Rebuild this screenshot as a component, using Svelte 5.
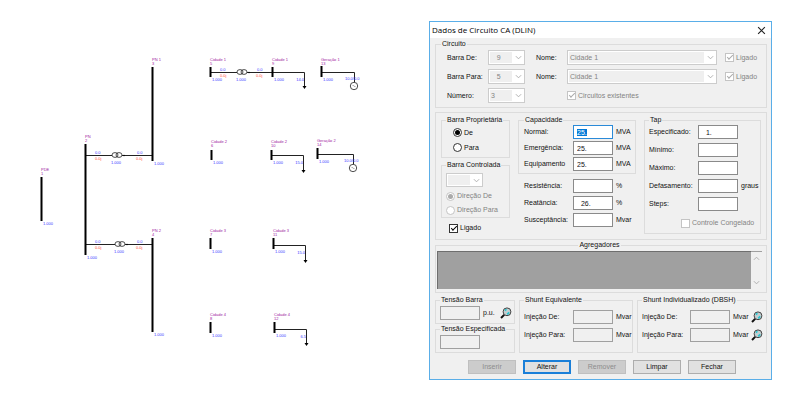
<script>
    import { onMount } from "svelte";

    // bars of the network: position, height and the name/number written above
    const buses = [
        { x: 41, y: 177, h: 44, name: "PDE", num: 1, lift: 6 },
        { x: 85, y: 144, h: 111, name: "PN", num: 2, lift: 6 },
        { x: 152, y: 67, h: 94, name: "PN 1", num: 3, lift: 6 },
        { x: 152, y: 238, h: 94, name: "PN 2", num: 4, lift: 6 },
        { x: 210, y: 67, h: 10, name: "Cidade 1", num: 5, lift: 6 },
        { x: 272, y: 67, h: 10, name: "Cidade 1", num: 9, lift: 6 },
        { x: 321, y: 66, h: 11, name: "Geração 1", num: 13, lift: 5 },
        { x: 211, y: 150, h: 10, name: "Cidade 2", num: 6, lift: 7 },
        { x: 271, y: 150, h: 10, name: "Cidade 2", num: 10, lift: 7 },
        { x: 317, y: 148, h: 11, name: "Geração 2", num: 14, lift: 6 },
        { x: 210, y: 238, h: 11, name: "Cidade 3", num: 7, lift: 6 },
        { x: 273, y: 238, h: 11, name: "Cidade 3", num: 11, lift: 6 },
        { x: 210, y: 322, h: 11, name: "Cidade 4", num: 8, lift: 6 },
        { x: 274, y: 322, h: 11, name: "Cidade 4", num: 12, lift: 6 },
    ];

    const branches = [
        { x1: 86, x2: 152, y: 155, mid: 117 },
        { x1: 86, x2: 152, y: 244, mid: 120 },
        { x1: 211, x2: 272, y: 72, mid: 242 },
    ];

    const loads = [
        { x1: 272, x2: 304, y: 72, end: 86, value: "14.0" },
        { x1: 271, x2: 303, y: 155, end: 170, value: "15.0" },
        { x1: 273, x2: 305, y: 245, end: 260, value: "15.0" },
        { x1: 274, x2: 306, y: 329, end: 343, value: "6.5" },
    ];

    const generators = [
        { x1: 321, x2: 354, y: 72 },
        { x1: 317, x2: 353, y: 154 },
    ];

    const capacidade = [
        { id: "normal", label: "Normal:", value: "25." },
        { id: "emergencia", label: "Emergência:", value: "25." },
        { id: "equipamento", label: "Equipamento", value: "25." },
    ];

    const parametros = [
        { id: "resistencia", label: "Resistência:", value: "", unit: "%" },
        { id: "reatancia", label: "Reatância:", value: "  26.", unit: "%" },
        { id: "susceptancia", label: "Susceptância:", value: "", unit: "Mvar" },
    ];

    const tap = [
        { id: "especificado", label: "Especificado:", value: "  1.", unit: "" },
        { id: "minimo", label: "Mínimo:", value: "", unit: "" },
        { id: "maximo", label: "Máximo:", value: "", unit: "" },
        { id: "defasamento", label: "Defasamento:", value: "", unit: "graus" },
        { id: "steps", label: "Steps:", value: "", unit: "" },
    ];

    let proprietaria = $state("de");
    let controlada = $state("de");
    let ligado = $state(true);

    onMount(() => {
        document.getElementById("normal").select();
    });
</script>

{#snippet combo(id, value, label)}
    <span class="combo">
        <select {id} disabled aria-label={label}>
            <option>{value}</option>
        </select>
        <svg viewBox="0 0 8 5"><path d="M1 1l3 3 3-3" /></svg>
    </span>
{/snippet}

{#snippet lens(label)}
    <button class="lens" aria-label={label}>
        <svg viewBox="0 0 12 12">
            <path d="M4.4 7.6L1 11" stroke="#111" stroke-width="2" />
            <circle cx="7" cy="4.8" r="3.9" fill="#c4ced0" stroke="#444" />
            <path d="M5 3.6l1.4-1.4M7.2 7.4l2-2" stroke="#20c8d4" stroke-width="1.6" />
        </svg>
    </button>
{/snippet}

<main>
    <svg class="network" viewBox="0 21 429 358">
        {#each branches as b}
            <path class="wire" d="M{b.x1} {b.y + 0.5}H{b.mid - 5}M{b.mid + 5} {b.y + 0.5}H{b.x2}" />
            <ellipse class="coil" cx={b.mid - 2} cy={b.y} rx="3" ry="2.4" />
            <ellipse class="coil" cx={b.mid + 2} cy={b.y} rx="3" ry="2.4" />
            <circle cx={b.mid + 7} cy={b.y + 0.5} r="0.8" />
            <text class="blue" x={b.x1 + 9} y={b.y - 1}>0.0</text>
            <text class="blue" x={b.x2 - 15} y={b.y - 1}>0.0</text>
            <text class="red" x={b.x1 + 9} y={b.y + 5}>0.0j</text>
            <text class="red" x={b.x2 - 16} y={b.y + 5}>0.0j</text>
            <text class="blue" x={b.mid - 6} y={b.y + 9}>1.000</text>
        {/each}

        {#each loads as l}
            <path class="wire" d="M{l.x1} {l.y + 0.5}H{l.x2 + 0.5}V{l.end}" />
            <path d="M{l.x2 - 1.5} {l.end}h4l-2 3z" />
            <text class="blue end" x={l.x2} y={l.y + 9}>{l.value}</text>
        {/each}

        {#each generators as g}
            <path class="wire" d="M{g.x1} {g.y + 0.5}H{g.x2 + 0.5}V{g.y + 10}" />
            <circle class="coil" cx={g.x2} cy={g.y + 14} r="3.7" />
            <path class="wave" d="M{g.x2 - 1.5} {g.y + 14}q0.8-2 1.5 0t1.5 0" />
            <text class="blue" x={g.x2 - 9} y={g.y + 8}>10.0/0.0</text>
        {/each}

        {#each buses as bus}
            <rect x={bus.x - 0.5} y={bus.y} width="2" height={bus.h} />
            <text class="purple" x={bus.x} y={bus.y - bus.lift}>{bus.name}</text>
            <text class="purple" x={bus.x} y={bus.y - bus.lift + 4}>{bus.num}</text>
            <text class="blue" x={bus.x + 2} y={bus.y + bus.h + 4}>1.000</text>
        {/each}
    </svg>

    <section class="dialog" role="dialog" aria-labelledby="title">
        <header>
            <h1 id="title">Dados de Circuito CA (DLIN)</h1>
            <button class="close" aria-label="Fechar janela">
                <svg viewBox="0 0 8 8"><path d="M1 1l6 6M7 1l-6 6" /></svg>
            </button>
        </header>

        <div class="body">
            <fieldset class="circuito">
                <legend>Circuito</legend>
                <div class="rows">
                    <label for="barraDe">Barra De:</label>
                    {@render combo("barraDe", "\u00a0\u00a0\u00a09")}
                    <label for="nomeDe">Nome:</label>
                    {@render combo("nomeDe", "Cidade 1")}
                    <label class="check off"><input type="checkbox" checked disabled />Ligado</label>

                    <label for="barraPara">Barra Para:</label>
                    {@render combo("barraPara", "\u00a0\u00a0\u00a05")}
                    <label for="nomePara">Nome:</label>
                    {@render combo("nomePara", "Cidade 1")}
                    <label class="check off"><input type="checkbox" checked disabled />Ligado</label>

                    <label for="numero">Número:</label>
                    {@render combo("numero", "3")}
                    <label class="check off existentes">
                        <input type="checkbox" checked disabled />Circuitos existentes
                    </label>
                </div>
            </fieldset>

            <div class="dados">
                <div class="column">
                    <fieldset class="radios">
                        <legend>Barra Proprietária</legend>
                        <label class="check"><input type="radio" name="prop" value="de" bind:group={proprietaria} />De</label>
                        <label class="check"><input type="radio" name="prop" value="para" bind:group={proprietaria} />Para</label>
                    </fieldset>
                    <fieldset class="controlada">
                        <legend>Barra Controlada</legend>
                        {@render combo("controlada", "", "Barra Controlada")}
                        <label class="check off"><input type="radio" name="ctrl" value="de" bind:group={controlada} disabled />Direção De</label>
                        <label class="check off"><input type="radio" name="ctrl" value="para" bind:group={controlada} disabled />Direção Para</label>
                    </fieldset>
                    <label class="check ligado"><input type="checkbox" bind:checked={ligado} />Ligado</label>
                </div>

                <div class="column">
                    <fieldset class="fields">
                        <legend>Capacidade</legend>
                        {#each capacidade as f}
                            <div class="field">
                                <label for={f.id}>{f.label}</label>
                                <input type="text" id={f.id} value={f.value} />
                                <span>MVA</span>
                            </div>
                        {/each}
                    </fieldset>
                    <div class="fields parametros">
                        {#each parametros as f}
                            <div class="field">
                                <label for={f.id}>{f.label}</label>
                                <input type="text" id={f.id} value={f.value} />
                                <span>{f.unit}</span>
                            </div>
                        {/each}
                    </div>
                </div>

                <fieldset class="fields tap">
                    <legend>Tap</legend>
                    {#each tap as f}
                        <div class="field">
                            <label for={f.id}>{f.label}</label>
                            <input type="text" id={f.id} value={f.value} />
                            <span>{f.unit}</span>
                        </div>
                    {/each}
                    <label class="check off congelado"><input type="checkbox" disabled />Controle Congelado</label>
                </fieldset>
            </div>

            <fieldset class="agregadores">
                <legend>Agregadores</legend>
                <div class="list"></div>
                <div class="scroll">
                    <svg viewBox="0 0 8 5"><path d="M1 4l3-3 3 3" /></svg>
                    <svg viewBox="0 0 8 5"><path d="M1 1l3 3 3-3" /></svg>
                </div>
            </fieldset>

            <div class="bottom">
                <div class="tensao">
                    <fieldset>
                        <legend>Tensão Barra</legend>
                        <input type="text" id="tensao" aria-label="Tensão Barra" disabled />
                        <label for="tensao">p.u.</label>
                        {@render lens("Buscar tensão")}
                    </fieldset>
                    <fieldset>
                        <legend>Tensão Especificada</legend>
                        <input type="text" aria-label="Tensão Especificada" disabled />
                    </fieldset>
                </div>
                <fieldset class="fields shunt">
                    <legend>Shunt Equivalente</legend>
                    {#each ["De", "Para"] as lado}
                        <div class="field">
                            <label for="eq{lado}">Injeção {lado}:</label>
                            <input type="text" id="eq{lado}" disabled />
                            <span>Mvar</span>
                        </div>
                    {/each}
                </fieldset>
                <fieldset class="fields shunt individual">
                    <legend>Shunt Individualizado (DBSH)</legend>
                    {#each ["De", "Para"] as lado}
                        <div class="field">
                            <label for="ind{lado}">Injeção {lado}:</label>
                            <input type="text" id="ind{lado}" disabled />
                            <span>Mvar</span>
                            {@render lens("Buscar injeção " + lado)}
                        </div>
                    {/each}
                </fieldset>
            </div>

            <footer>
                <button disabled>Inserir</button>
                <button class="default">Alterar</button>
                <button disabled>Remover</button>
                <button>Limpar</button>
                <button>Fechar</button>
            </footer>
        </div>
    </section>
</main>

<style>
    :global(body) {
        margin: 0;
        background: #fff;
    }
    main {
        display: grid;
        grid-template-columns: 429fr 343fr;
        align-items: start;
        padding: 21px 28px 20px 0;
        font: 7px/10px "Liberation Sans", Arial, sans-serif;
        color: #111;
    }
    * {
        box-sizing: border-box;
    }

    .network {
        display: block;
        width: 100%;
        font: 4px "Liberation Sans", sans-serif;
    }
    .wire {
        fill: none;
        stroke: #222;
        stroke-width: 1;
    }
    .coil {
        fill: none;
        stroke: #222;
        stroke-width: 0.8;
    }
    .wave {
        fill: none;
        stroke: #777;
        stroke-width: 0.5;
    }
    .blue {
        fill: #3a3aff;
    }
    .red {
        fill: #ff4a3a;
    }
    .purple {
        fill: #a020a0;
    }
    .end {
        text-anchor: end;
    }

    .dialog {
        background: #f0f0f0;
        border: 1px solid #5aaee8;
    }
    header {
        display: flex;
        justify-content: space-between;
        align-items: center;
        height: 16px;
        padding: 0 5px 0 2px;
        background: #fff;
    }
    h1 {
        margin: 0;
        font: 8px/16px "Open Sans", sans-serif;
        color: #000;
    }
    .close {
        display: flex;
        padding: 0;
        border: 0;
        background: none;
    }
    .close svg {
        width: 9px;
        height: 9px;
        fill: none;
        stroke: #222;
    }
    .body {
        padding: 1px 4px 5px 5px;
    }

    fieldset {
        min-width: 0;
        margin: 0;
        padding: 0;
        border: 1px solid #dcdcdc;
    }
    legend {
        height: 10px;
        padding: 0 1px;
        white-space: nowrap;
    }
    label,
    span {
        white-space: nowrap;
    }

    input[type="text"] {
        width: 40px;
        height: 14px;
        padding: 0 3px;
        border: 1px solid #8a8a8a;
        border-radius: 0;
        outline: 0;
        background: #fff;
        font: inherit;
        color: #111;
    }
    input[type="text"]:focus {
        border-color: #2a8ad8;
    }
    input[type="text"]:disabled {
        border-color: #a0a0a0;
        background: #f0f0f0;
    }
    input::selection {
        background: #0078d7;
        color: #fff;
    }

    .combo {
        position: relative;
        display: block;
        height: 15px;
    }
    select {
        display: block;
        width: 100%;
        height: 100%;
        padding: 0 14px 0 2px;
        appearance: none;
        border: 1px solid #ccc;
        border-radius: 0;
        background: linear-gradient(#efefef, #efefef) 1px 1px no-repeat #fff;
        background-size: calc(100% - 13px) calc(100% - 2px);
        font: inherit;
        color: #838383;
        opacity: 1;
    }
    .combo svg {
        position: absolute;
        right: 3px;
        top: 5px;
    }
    .combo svg,
    .scroll svg {
        width: 7px;
        height: 5px;
        fill: none;
        stroke: #a8a8a8;
    }

    .check {
        display: flex;
        align-items: center;
        gap: 2px;
    }
    .check input {
        display: grid;
        place-content: center;
        flex: none;
        width: 9px;
        height: 9px;
        margin: 0;
        appearance: none;
        border: 1px solid #333;
        background: #fff;
    }
    .check input[type="radio"] {
        border-radius: 50%;
    }
    .check input[type="radio"]:checked::before {
        content: "";
        width: 5px;
        height: 5px;
        border-radius: 50%;
        background: currentColor;
    }
    .check input[type="checkbox"]:checked::before {
        content: "";
        width: 5px;
        height: 2px;
        border: solid currentColor;
        border-width: 0 0 1px 1px;
        rotate: -45deg;
        translate: 0 -1px;
    }
    .off {
        color: #838383;
    }
    .off input {
        border-color: #c4c4c4;
        color: #aaa;
    }

    .circuito {
        padding: 1px 0 4px 5px;
    }
    .rows {
        display: grid;
        grid-template-columns: 41px 48px 31px 1fr 41px;
        row-gap: 4px;
        align-items: center;
        padding-left: 6px;
    }
    .rows .combo {
        margin-right: 8px;
    }
    .rows label + .combo:nth-of-type(odd) {
        margin-right: 11px;
    }
    .existentes {
        grid-column: 4 / 6;
    }

    .dados {
        display: grid;
        grid-template-columns: 69px 1fr 117px;
        gap: 8px;
        margin-top: 4px;
        padding: 2px 5px 5px;
        border: 1px solid #dcdcdc;
    }
    .radios {
        padding: 0 0 2px 4px;
    }
    .radios .check {
        height: 15px;
        padding-left: 7px;
    }
    .controlada {
        margin-top: 2px;
        padding: 3px 0 0 4px;
    }
    .controlada .combo {
        width: 37px;
        height: 14px;
        margin-bottom: 2px;
    }
    .controlada .check {
        height: 14px;
    }
    .ligado {
        margin: 5px 0 0 8px;
    }

    .fields {
        display: flex;
        flex-direction: column;
        gap: 2px;
        padding: 0 0 2px 5px;
    }
    .field {
        display: grid;
        grid-template-columns: 49px 40px 1fr;
        align-items: center;
    }
    .field span {
        padding-left: 3px;
    }
    .parametros {
        gap: 3px;
        padding: 5px 0 0 6px;
    }
    .tap {
        gap: 4px;
        padding-left: 4px;
    }
    .congelado {
        height: 16px;
        padding-left: 32px;
    }

    .agregadores {
        display: flex;
        padding: 1px 4px 3px 1px;
    }
    .agregadores legend {
        margin: 0 auto;
    }
    .list {
        flex: 1;
        height: 38px;
        border: solid #6e6e6e;
        border-width: 1px 0 0 1px;
        background: #a0a0a0;
    }
    .scroll {
        display: flex;
        flex-direction: column;
        justify-content: space-between;
        padding: 4px 2px;
        border-top: 1px solid #a0a0a0;
    }

    .bottom {
        display: grid;
        grid-template-columns: 80px 114px 1fr;
        gap: 4px;
        margin-top: 2px;
    }
    .tensao fieldset {
        display: flex;
        align-items: center;
        gap: 3px;
        padding: 1px 0 3px 4px;
    }
    .shunt {
        gap: 4px;
        padding: 5px 0 7px 4px;
    }
    .individual .field {
        grid-template-columns: 48px 40px 21px 1fr;
    }
    .lens {
        display: flex;
        padding: 0;
        border: 0;
        background: none;
    }
    .lens svg {
        width: 12px;
        height: 12px;
        fill: none;
    }
    .tensao .lens {
        margin-left: 2px;
    }

    footer {
        display: flex;
        gap: 7px;
        margin-top: 7px;
        padding-left: 33px;
    }
    footer button {
        width: 48px;
        height: 14px;
        padding: 0;
        border: 1px solid #adadad;
        background: #e1e1e1;
        font: inherit;
        color: #111;
    }
    footer button:disabled {
        border-color: #bfbfbf;
        background: #ccc;
        color: #8c8c8c;
    }
    footer .default {
        border: 2px solid #1a7fd8;
    }
</style>
